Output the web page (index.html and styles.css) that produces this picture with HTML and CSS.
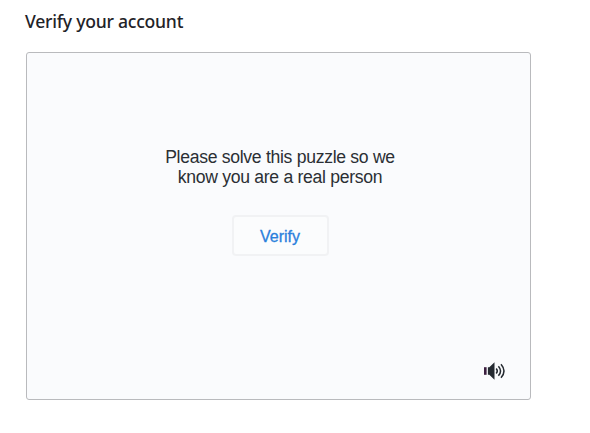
FILE: index.html
```html
<!DOCTYPE html>
<html lang="en">
<head>
<meta charset="utf-8">
<title>Verify your account</title>
<link rel="stylesheet" href="styles.css">
</head>
<body>
<main class="page">
  <h1 class="title"><span class="title-text">Verify your account</span></h1>
  <section class="card">
    <p class="prompt">Please solve this puzzle so we<br>know you are a real person</p>
    <button class="verify" type="button">Verify</button>
    <button class="audio" type="button" aria-label="Audio">
      <svg width="22" height="20" viewBox="0 0 22 20">
        <path d="M1 6.200h2.600v7.600H1z" fill="#3b1f3f"/>
        <path d="M4.900 6.200h1.400L11.500 1.200v17.600l-5.200-5H4.900z" fill="#252a31"/>
        <g fill="none" stroke="#252a31" stroke-width="1.500">
          <path d="M13.200 7.500q2.200 2.500 0 5"/>
          <path d="M15.400 5.200q4.300 4.800 0 9.600"/>
          <path d="M18 3.200q6 6.800 0 13.600"/>
        </g>
      </svg>
    </button>
  </section>
</main>
</body>
</html>
```
FILE: styles.css
```css
body {
  margin: 0;
  background: #fff;
  color: #2b2f34;
  font-family: "Liberation Sans", Arial, sans-serif;
}

.page {
  padding: 9px 0 0 26px;
}

.title {
  margin: 0 0 19px;
  height: 24px;
  font: 500 17.600px/24px "Noto Sans", sans-serif;
  color: #1f2328;
  white-space: nowrap;
}

.title-text {
  margin-left: -1px;
  letter-spacing: -0.250px;
}

.card {
  box-sizing: border-box;
  width: 505px;
  height: 348px;
  padding: 94px 25px 18px 28px;
  border: 1px solid #b9babd;
  border-radius: 3px;
  background: #fafbfd;
  display: flex;
  flex-direction: column;
  align-items: center;
}

.prompt {
  margin: 0;
  font-size: 17.600px;
  letter-spacing: -0.300px;
  line-height: 20px;
  text-align: center;
}

.verify {
  width: 97px;
  height: 41px;
  margin-top: 28px;
  padding: 2px 0 0;
  border: 2px solid #f1f2f4;
  border-radius: 4px;
  background: #fbfcfd;
  color: #2a80dc;
  font: 16px/20px "Liberation Sans", Arial, sans-serif;
  -webkit-text-stroke: 0.300px #2a80dc;
}

.audio {
  align-self: flex-end;
  margin-top: auto;
  padding: 0;
  border: 0;
  background: none;
}

.audio svg {
  display: block;
}
```
